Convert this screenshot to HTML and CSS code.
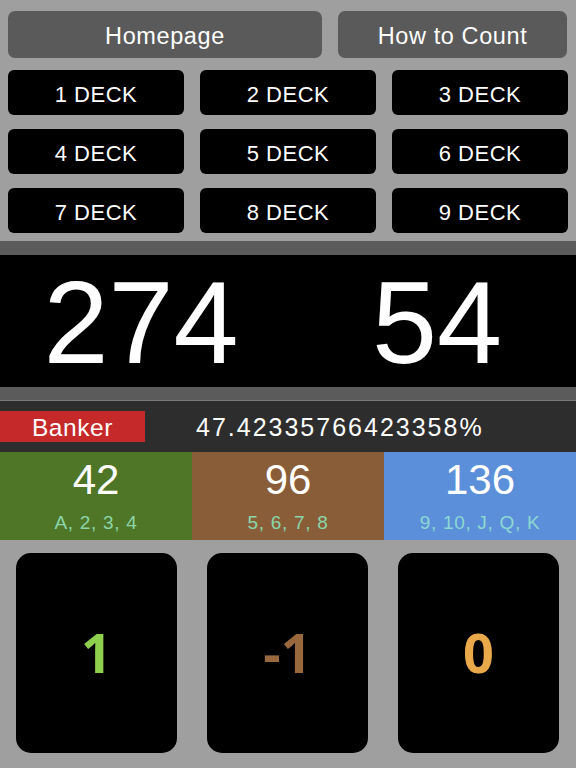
FILE: index.html
```html
<!DOCTYPE html>
<html>
<head>
<meta charset="utf-8">
<link rel="stylesheet" href="styles.css">
</head>
<body>
<div class="app">
  <div class="top">
    <div class="btn-top">Homepage</div>
    <div class="btn-top">How to Count</div>
  </div>
  <div class="decks">
    <div class="deck">1 DECK</div>
    <div class="deck">2 DECK</div>
    <div class="deck">3 DECK</div>
    <div class="deck">4 DECK</div>
    <div class="deck">5 DECK</div>
    <div class="deck">6 DECK</div>
    <div class="deck">7 DECK</div>
    <div class="deck">8 DECK</div>
    <div class="deck">9 DECK</div>
  </div>
  <div class="band"></div>
  <div class="counts">
    <div class="count count-left">274</div>
    <div class="count count-right">54</div>
  </div>
  <div class="band band-lower"></div>
  <div class="status">
    <div class="banker">Banker</div>
    <div class="percent">47.42335766423358%</div>
  </div>
  <div class="groups">
    <div class="group g-low"><div class="g-num">42</div><div class="g-sub">A, 2, 3, 4</div></div>
    <div class="group g-mid"><div class="g-num">96</div><div class="g-sub">5, 6, 7, 8</div></div>
    <div class="group g-high"><div class="g-num">136</div><div class="g-sub">9, 10, J, Q, K</div></div>
  </div>
  <div class="cards">
    <div class="card"><span class="v v-plus">1</span></div>
    <div class="card"><span class="v v-minus">-1</span></div>
    <div class="card"><span class="v v-zero">0</span></div>
  </div>
</div>
</body>
</html>
```
FILE: styles.css
```css
html, body {
  margin: 0;
  padding: 0;
}
body {
  background: #9f9f9f;
  font-family: "Liberation Sans", Arial, sans-serif;
  color: #fff;
  width: 576px;
  height: 768px;
  overflow: hidden;
}
.app {
  display: flex;
  flex-direction: column;
}
.top {
  display: grid;
  grid-template-columns: 314px 229px;
  column-gap: 16px;
  padding: 11px 8px 0 8px;
}
.btn-top {
  box-sizing: border-box;
  height: 47px;
  padding-top: 3px;
  background: #5a5a5a;
  border-radius: 7px;
  display: flex;
  align-items: center;
  justify-content: center;
  font-size: 23.5px;
  letter-spacing: 0.6px;
}
.decks {
  display: grid;
  grid-template-columns: 176px 176px 176px;
  column-gap: 16px;
  row-gap: 14px;
  padding: 12px 8px 0 8px;
}
.deck {
  box-sizing: border-box;
  height: 45px;
  padding-top: 4px;
  background: #000;
  border-radius: 6px;
  display: flex;
  align-items: center;
  justify-content: center;
  font-size: 22px;
  letter-spacing: 0.5px;
}
.band {
  margin-top: 8px;
  height: 14px;
  background: #5b5b5b;
}
.band-lower {
  margin-top: 0;
  box-sizing: border-box;
  border-bottom: 1px solid #7a7a7a;
}
.counts {
  height: 132px;
  background: #000;
  display: grid;
  grid-template-columns: 1fr 1fr;
  align-items: center;
}
.count {
  text-align: center;
  font-size: 117px;
  line-height: 132px;
  padding-top: 2px;
}
.count-left {
  padding-right: 6px;
}
.count-right {
  padding-left: 10px;
}
.status {
  height: 51px;
  background: #2d2d2d;
  display: flex;
  align-items: center;
}
.banker {
  box-sizing: border-box;
  width: 145px;
  height: 31px;
  padding-top: 2px;
  background: #c5292a;
  display: flex;
  align-items: center;
  justify-content: center;
  font-size: 24.5px;
  letter-spacing: 0.6px;
}
.percent {
  margin-left: 51px;
  padding-top: 2px;
  font-size: 25px;
  letter-spacing: 2px;
}
.groups {
  display: grid;
  grid-template-columns: 192px 192px 192px;
  height: 88px;
}
.group {
  display: flex;
  flex-direction: column;
  align-items: center;
}
.g-low { background: #4f7527; }
.g-mid { background: #895d38; }
.g-high { background: #5c8fd9; }
.g-num {
  font-size: 42px;
  line-height: 40px;
  margin-top: 8px;
}
.g-sub {
  font-size: 19px;
  letter-spacing: 0.7px;
  color: #8ad6aa;
  margin-top: 12px;
}
.g-high .g-sub {
  color: #8cd8d2;
}
.cards {
  display: grid;
  grid-template-columns: 161px 161px 161px;
  column-gap: 30px;
  padding: 13px 16px 0 16px;
}
.card {
  box-sizing: border-box;
  height: 200px;
  padding-bottom: 2px;
  background: #000;
  border-radius: 15px;
  display: flex;
  align-items: center;
  justify-content: center;
}
.v {
  font-family: "Open Sans", "DejaVu Sans", sans-serif;
  font-weight: 700;
  font-size: 54px;
}
.v-plus { color: #8ed04e; }
.v-minus { color: #99683c; }
.v-zero { color: #e9a94b; }
```
